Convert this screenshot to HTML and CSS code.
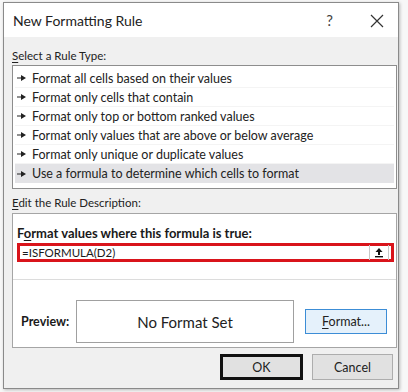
FILE: index.html
```html
<!DOCTYPE html>
<html lang="en">
<head>
    <meta charset="UTF-8">
    <title>New Formatting Rule</title>
    <link rel="stylesheet" href="styles.css">
</head>
<body>
    <div class="dialog">
        <!-- Title bar -->
        <div class="title-bar">
            <span class="title">New Formatting Rule</span>
            <span class="help">?</span>
            <svg class="close" width="14" height="14" viewBox="0 0 14 14">
                <path d="M1 1 L13 13 M13 1 L1 13" stroke="#333" stroke-width="1.2" fill="none"/>
            </svg>
        </div>

        <div class="dialog-body">
            <div class="section-label"><u>S</u>elect a Rule Type:</div>
            <ul class="rule-list">
                <li><svg class="arrow" width="9" height="6" viewBox="0 0 9 6"><path d="M0 2.5 H4 V0 L9 3 L4 6 V3.5 H0 Z" fill="#222"/></svg>Format all cells based on their values</li>
                <li><svg class="arrow" width="9" height="6" viewBox="0 0 9 6"><path d="M0 2.5 H4 V0 L9 3 L4 6 V3.5 H0 Z" fill="#222"/></svg>Format only cells that contain</li>
                <li><svg class="arrow" width="9" height="6" viewBox="0 0 9 6"><path d="M0 2.5 H4 V0 L9 3 L4 6 V3.5 H0 Z" fill="#222"/></svg>Format only top or bottom ranked values</li>
                <li><svg class="arrow" width="9" height="6" viewBox="0 0 9 6"><path d="M0 2.5 H4 V0 L9 3 L4 6 V3.5 H0 Z" fill="#222"/></svg>Format only values that are above or below average</li>
                <li><svg class="arrow" width="9" height="6" viewBox="0 0 9 6"><path d="M0 2.5 H4 V0 L9 3 L4 6 V3.5 H0 Z" fill="#222"/></svg>Format only unique or duplicate values</li>
                <li class="selected"><svg class="arrow" width="9" height="6" viewBox="0 0 9 6"><path d="M0 2.5 H4 V0 L9 3 L4 6 V3.5 H0 Z" fill="#222"/></svg>Use a formula to determine which cells to format</li>
            </ul>

            <div class="section-label"><u>E</u>dit the Rule Description:</div>
            <div class="desc-box">
                <div class="formula-label">F<u>o</u>rmat values where this formula is true:</div>
                <div class="formula-input">
                    <span class="formula-text">=ISFORMULA(D2)</span>
                    <span class="ref-btn">
                        <svg width="10" height="11" viewBox="0 0 10 11">
                            <path d="M5 1 L1.5 5 H4 V8 H6 V5 H8.5 Z" fill="#111"/>
                            <rect x="1" y="9" width="8" height="1.4" fill="#111"/>
                        </svg>
                    </span>
                </div>
                <div class="separator"></div>
                <div class="preview-row">
                    <span class="preview-label">Preview:</span>
                    <div class="preview-box">No Format Set</div>
                    <button class="format-btn"><u>F</u>ormat...</button>
                </div>
            </div>

            <div class="button-row">
                <button class="ok-btn">OK</button>
                <button class="cancel-btn">Cancel</button>
            </div>
        </div>
    </div>
</body>
</html>
```

FILE: styles.css
```css
* { box-sizing: border-box; margin: 0; padding: 0; }
body { font-family: 'Lato', 'Noto Sans', sans-serif; background: #f7f7f7; color: #1a1a1a; width: 408px; height: 392px; overflow: hidden; padding: 2px 0 0 3px; }
u { text-decoration: underline; text-underline-offset: 2px; }

.dialog { width: 396px; height: 387px; border: 1px solid #8a8a8a; background: #f0f0f0; box-shadow: 1px 1px 3px rgba(0, 0, 0, 0.25); display: flex; flex-direction: column; }
.title-bar { height: 34px; background: #fff; display: flex; align-items: center; padding: 0 14px 0 9px; }
.title { font-size: 14px; flex: 1; color: #222; }
.help { font-size: 15px; color: #444; margin-right: 37px; }
.close { margin-top: 1px; }

.dialog-body { flex: 1; padding: 0 0 0 8px; display: flex; flex-direction: column; }
.section-label { font-size: 11.5px; color: #222; height: 20px; line-height: 20px; }
.section-label:first-child { margin-top: 9px; }

.rule-list { list-style: none; width: 385px; height: 124px; margin-top: -1px; background: #fff; border: 1px solid #8d8d8d; padding: 3px 2px 0 2px; }
.rule-list li { height: 19px; line-height: 19px; font-size: 12.5px; padding-left: 2px; border-bottom: 1px solid #f4f4f4; display: flex; align-items: center; color: #222; }
.rule-list li.selected { background: #e3e3e6; border-bottom: none; }
.arrow { margin-right: 6px; }

.rule-list + .section-label { margin-top: 4px; }
.desc-box { width: 385px; height: 135px; background: #fff; border: 1px solid #a5a5a5; padding: 11px 0 0 4px; display: flex; flex-direction: column; }
.formula-label { font-size: 13px; font-weight: bold; height: 16px; line-height: 16px; }
.formula-input { margin-top: 2px; height: 19px; width: 377px; border: 3px solid #d9141b; display: flex; align-items: center; padding-left: 2px; }
.formula-text { flex: 1; font-size: 11.5px; line-height: 13px; }
.ref-btn { width: 20px; height: 15px; border-left: 1px solid #c8c8c8; border-right: 1px solid #c8c8c8; display: flex; align-items: center; justify-content: center; margin-right: 2px; }
.separator { height: 1px; background: #dcdcdc; margin: 17px 0 0 -4px; }

.preview-row { display: flex; align-items: center; margin-top: 20px; }
.preview-label { font-size: 12.5px; font-weight: bold; width: 59px; padding-left: 4px; }
.preview-box { width: 218px; height: 43px; border: 1px solid #a0a0a0; display: flex; align-items: center; justify-content: center; font-size: 15px; color: #222; }
.format-btn { margin-left: 11px; width: 82px; height: 25px; background: #e5f1fb; border: 1px solid #3c8dd6; font-family: inherit; font-size: 12.5px; color: #222; }

.button-row { display: flex; justify-content: flex-end; gap: 9px; padding-right: 5px; margin-top: 6px; }
.button-row button { height: 26px; font-family: inherit; font-size: 12.5px; color: #222; background: #e1e1e1; }
.ok-btn { width: 83px; border: 3px solid #111; }
.cancel-btn { width: 81px; border: 1px solid #adadad; }
```
